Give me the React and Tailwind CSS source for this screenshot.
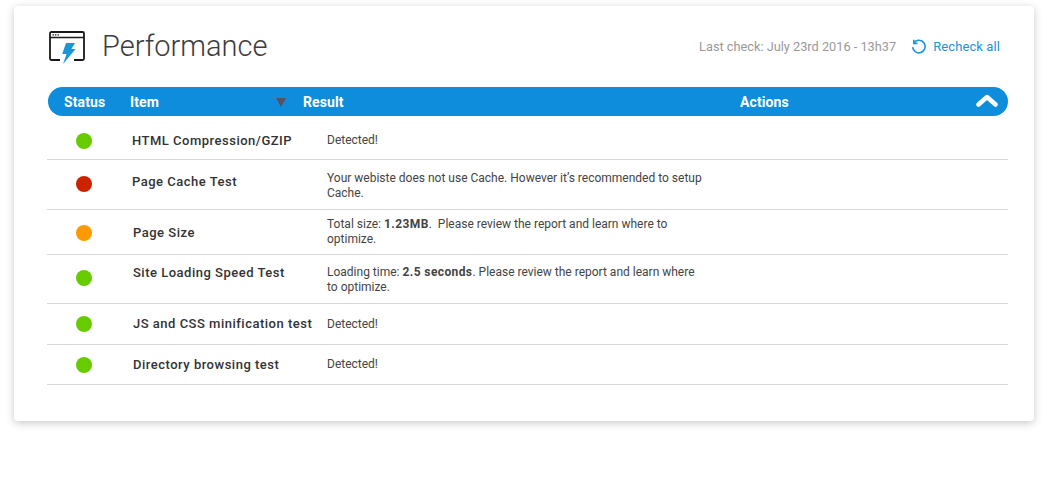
const rows = [
  { color: "bg-[#66cc00]", item: "HTML Compression/GZIP", row: "h-[44px] pt-[6px]", dotCls: "", itemCls: "ml-0", result: <>Detected!</> },
  { color: "bg-[#cc2200]", item: "Page Cache Test", row: "h-[50px] pt-[2px]", dotCls: "mt-[-4px]", itemCls: "mt-[-8px]", result: <>Your webiste does not use Cache. However it’s recommended to setup Cache.</> },
  { color: "bg-[#ff9900]", item: "Page Size", row: "h-[45px]", dotCls: "mt-[2px]", itemCls: "ml-[1px] mt-[2px]", result: <>Total size: <b className="font-bold tracking-[0.4px]">1.23MB</b>.&nbsp; Please review the report and learn where to optimize.</> },
  { color: "bg-[#66cc00]", item: "Site Loading Speed Test", row: "h-[49px] pt-[2px]", dotCls: "mt-[-4px]", itemCls: "ml-[1px] mt-[-14px]", result: <>Loading time: <b className="font-bold tracking-[0.4px]">2.5 seconds</b>. Please review the report and learn where to optimize.</> },
  { color: "bg-[#66cc00]", item: "JS and CSS minification test", row: "h-[41px]", dotCls: "", itemCls: "ml-[1px]", result: <>Detected!</> },
  { color: "bg-[#66cc00]", item: "Directory browsing test", row: "h-[40px]", dotCls: "", itemCls: "ml-[1px]", result: <>Detected!</> },
];

function PerfIcon() {
  return (
    <svg width="38" height="36" viewBox="0 0 38 36" fill="none">
      <rect x="1" y="1" width="34" height="28" rx="1.5" stroke="#1a1a1a" strokeWidth="1.8" />
      <path d="M1 6.5h34" stroke="#1a1a1a" strokeWidth="1.6" />
      <path d="M3.5 3.8h1.4M6 3.8h1.4M8.5 3.8h1.4" stroke="#1a1a1a" strokeWidth="1.3" />
      <path d="M11 29h14" stroke="#fff" strokeWidth="3.5" />
      <path d="M17 12h9l-3.6 6h4.2L14 33l3.6-10h-4.4z" fill="#1b94dc" />
    </svg>
  );
}

export default function App() {
  return (
    <div className="w-[1047px] h-[493px] bg-white pt-[6px] pl-[14px] overflow-hidden font-['Roboto',sans-serif]">
      <div className="w-[1020px] h-[415px] bg-white rounded-[4px] shadow-[0_2px_9px_rgba(0,0,0,0.22)] pl-[34px] pr-[26px]">
        <div className="h-[81px] flex items-center">
          <div className="ml-[1px] mt-[5px] w-[53px]">
            <PerfIcon />
          </div>
          <h1 className="text-[29px] font-light text-[#3c3c3c] leading-none mt-[-1px]">Performance</h1>
          <span className="ml-auto text-[12.75px] text-[#999999]">Last check: July 23rd 2016 - 13h37</span>
          <a className="ml-[15px] mr-[8px] flex items-center gap-[7px] text-[13px] tracking-[0.1px] text-[#1b94dc]">
            <svg width="15" height="15" viewBox="0 0 24 24" fill="none" stroke="#1b94dc" strokeWidth="2.6">
              <path d="M5 5.5A10 10 0 1 1 2.6 13" />
              <path d="M4.5 1v6h6" />
            </svg>
            Recheck all
          </a>
        </div>
        <div className="w-[960px] h-[29px] pt-[1px] rounded-full bg-[#0d8ddb] flex items-center text-white text-[14px] font-bold tracking-[0.1px] relative">
          <span className="ml-[16px] w-[66px]">Status</span>
          <span className="w-[146px]">Item</span>
          <span className="w-[27px] flex items-center">
            <svg width="10" height="9" viewBox="0 0 10 9"><path d="M0 0h10L5 9z" fill="#555555" /></svg>
          </span>
          <span className="w-[437px]">Result</span>
          <span>Actions</span>
          <svg className="absolute right-[10px] top-[7px]" width="22" height="13" viewBox="0 0 22 13" fill="none">
            <path d="M2.5 10.5L11 3l8.5 7.5" stroke="#fff" strokeWidth="4.5" strokeLinecap="round" strokeLinejoin="round" />
          </svg>
        </div>
        <div className="w-[961px] ml-[-1px]">
          {rows.map((r) => (
            <div key={r.item} className={`flex items-center border-b border-[#d8d8d8] ${r.row}`}>
              <div className="w-[73px] flex justify-center">
                <span className={`w-4 h-4 rounded-full ${r.color} ${r.dotCls}`} />
              </div>
              <div className="w-[207px] pl-[12px]">
                <div className={`text-[13px] font-medium text-[#333333] tracking-[0.5px] whitespace-nowrap ${r.itemCls}`}>{r.item}</div>
              </div>
              <div className="w-[378px] text-[12px] leading-[15px] text-[#444444]">{r.result}</div>
            </div>
          ))}
        </div>
      </div>
    </div>
  );
}
